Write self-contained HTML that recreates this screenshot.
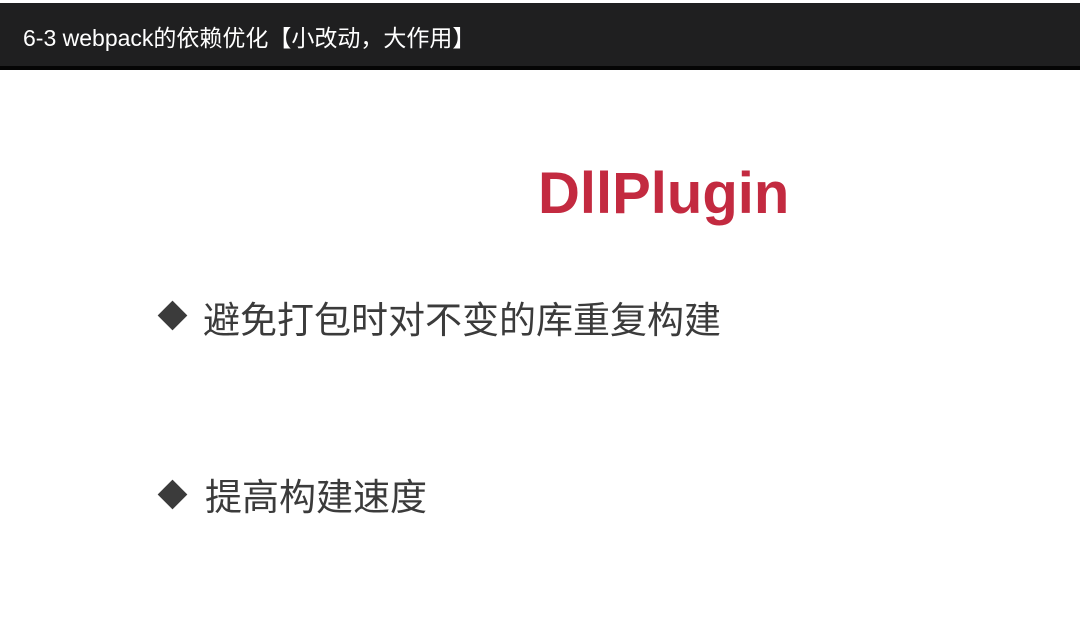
<!DOCTYPE html>
<html><head><meta charset="utf-8"><style>
body{margin:0;width:1080px;height:626px;background:#fff;position:relative;overflow:hidden;font-family:"Liberation Sans","Noto Sans CJK SC",sans-serif}
.bar{position:absolute;left:0;top:3px;width:1080px;height:63px;background:#1f1f20;border-bottom:4px solid #050505}
.t{position:absolute;left:23px;top:16px;color:#fff;font-size:23px;white-space:nowrap}
.h{position:absolute;left:538px;top:160px;font-size:58px;font-weight:bold;color:#c32a40;white-space:nowrap}
.b{position:absolute;color:#3b3b3b;white-space:nowrap}
.d{position:absolute;width:21px;height:21px;background:#3b3b3b;transform:rotate(45deg)}
</style></head><body>
<div class="bar"><div class="t">6-3 webpack的依赖优化【小改动，大作用】</div></div>
<div class="h">DllPlugin</div>
<div class="d" style="left:162px;top:305px"></div>
<div class="b" style="left:203px;top:290px;font-size:37px">避免打包时对不变的库重复构建</div>
<div class="d" style="left:162px;top:484px"></div>
<div class="b" style="left:205px;top:467px;font-size:37px">提高构建速度</div>
</body></html>
